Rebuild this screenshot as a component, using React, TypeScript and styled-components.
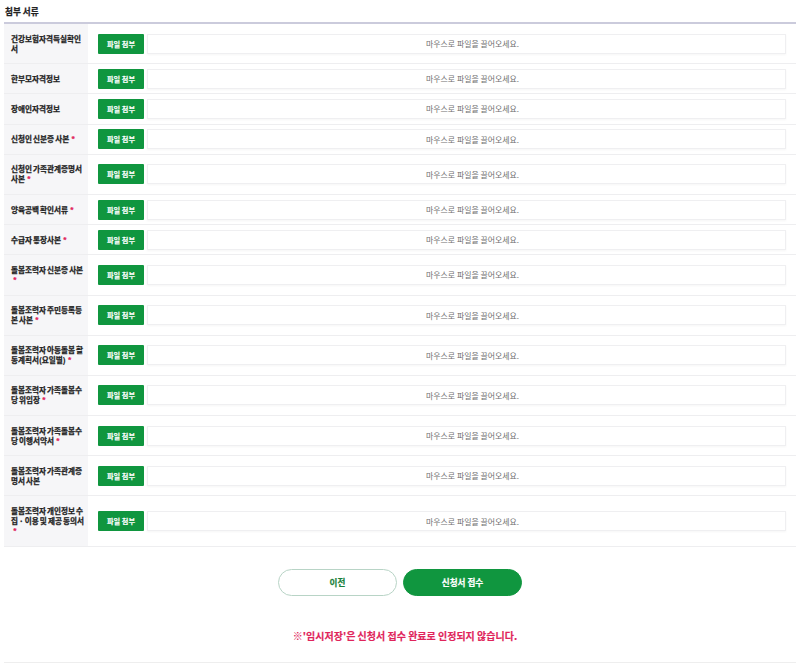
import React, { ReactElement } from "react";
import styled, { createGlobalStyle } from "styled-components";

const GlobalStyle = createGlobalStyle`
    html, body {
        margin: 0;
        padding: 0;
        background: #ffffff;
        font-family: "Noto Sans CJK KR", "Noto Sans", sans-serif;
    }
`;

type DocRow = {
    label: string;
    required: boolean;
};

const docs: DocRow[] = [
    { label: "건강보험자격득실확인서", required: false },
    { label: "한부모자격정보", required: false },
    { label: "장애인자격정보", required: false },
    { label: "신청인 신분증 사본", required: true },
    { label: "신청인 가족관계증명서 사본", required: true },
    { label: "양육공백 확인서류", required: true },
    { label: "수급자 통장사본", required: true },
    { label: "돌봄조력자 신분증 사본", required: true },
    { label: "돌봄조력자 주민등록등본 사본", required: true },
    { label: "돌봄조력자 아동돌봄 활동계획서(요일별)", required: true },
    { label: "돌봄조력자 가족돌봄수당 위임장", required: true },
    { label: "돌봄조력자 가족돌봄수당 이행서약서", required: true },
    { label: "돌봄조력자 가족관계증명서 사본", required: false },
    { label: "돌봄조력자 개인정보 수집 · 이용 및 제공 동의서", required: true },
];

const green = "#10963f";

const Page = styled.div`
    padding: 0 4px;
`;

const Title = styled.h2`
    margin: 0;
    padding: 6px 1px 0;
    height: 16px;
    font-size: 8.6px;
    font-weight: 700;
    line-height: 10px;
    color: #222;
    -webkit-text-stroke: 0.25px currentColor;
`;

const Table = styled.div`
    border-top: 2px solid #cbcbdc;
`;

const Row = styled.div`
    display: grid;
    grid-template-columns: 84px 1fr;
    border-bottom: 1px solid #eeeef0;
`;

const LabelCell = styled.div`
    background: #f6f6f8;
    padding: 9.6px 2px 9.6px 7px;
    font-size: 7.6px;
    line-height: 10px;
    font-weight: 700;
    word-spacing: -0.6px;
    color: #222;
    -webkit-text-stroke: 0.25px currentColor;
`;

const Required = styled.span`
    color: #e0245a;
    margin-left: 2px;
`;

const FieldCell = styled.div`
    display: flex;
    align-items: center;
    gap: 3px;
    padding: 0 10px;
`;

const AttachButton = styled.button`
    flex: none;
    width: 46px;
    height: 20px;
    border: none;
    border-radius: 1px;
    background: ${green};
    color: #ffffff;
    font-family: inherit;
    font-size: 7.2px;
    font-weight: 700;
    -webkit-text-stroke: 0.15px currentColor;
    padding: 0;
    cursor: pointer;
`;

const DropZone = styled.div`
    flex: 1;
    height: 20px;
    box-sizing: border-box;
    border: 1px solid #efeff1;
    box-shadow: 0 1px 2px rgba(0, 0, 0, 0.04);
    display: flex;
    align-items: center;
    justify-content: center;
    padding-left: 12px;
    font-size: 7.9px;
    color: #6f6f6f;
`;

const ButtonRow = styled.div`
    display: flex;
    justify-content: center;
    gap: 6px;
    margin-top: 22px;
`;

type PillProps = {
    $primary?: boolean;
};

const Pill = styled.button<PillProps>`
    width: 119px;
    height: 27px;
    border-radius: 14px;
    box-sizing: border-box;
    border: 1px solid ${props => props.$primary ? green : "#b8d4c6"};
    background: ${props => props.$primary ? green : "#ffffff"};
    color: ${props => props.$primary ? "#ffffff" : "#17803a"};
    font-family: inherit;
    font-size: 8.6px;
    font-weight: 700;
    -webkit-text-stroke: 0.2px currentColor;
    cursor: pointer;
`;

const Notice = styled.p`
    margin: 34px 0 0;
    padding: 0 0 20px 10px;
    text-align: center;
    font-size: 10px;
    line-height: 12px;
    font-weight: 700;
    -webkit-text-stroke: 0.15px currentColor;
    color: #e0245a;
    border-bottom: 1px solid #eeeeee;
`;

export default function App(): ReactElement {
    return (
        <>
            <GlobalStyle />
            <Page>
                <Title>첨부 서류</Title>
                <Table>
                    {docs.map((d) => (
                        <Row key={d.label}>
                            <LabelCell>
                                {d.label}
                                {d.required && <Required>*</Required>}
                            </LabelCell>
                            <FieldCell>
                                <AttachButton>파일 첨부</AttachButton>
                                <DropZone>마우스로 파일을 끌어오세요.</DropZone>
                            </FieldCell>
                        </Row>
                    ))}
                </Table>
                <ButtonRow>
                    <Pill>이전</Pill>
                    <Pill $primary>신청서 접수</Pill>
                </ButtonRow>
                <Notice>※'임시저장'은 신청서 접수 완료로 인정되지 않습니다.</Notice>
            </Page>
        </>
    );
}
